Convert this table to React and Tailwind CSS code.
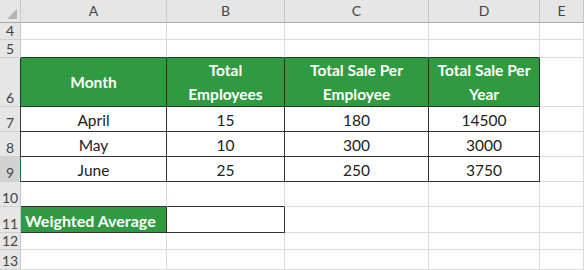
import React from 'react';

const cols = ['A', 'B', 'C', 'D', 'E'];

// rows of the sheet: [number, height, cells]
const rows = [
  { n: 4, h: 17 },
  { n: 5, h: 18, topOfTable: true },
  {
    n: 6,
    h: 49,
    head: ['Month', 'Total Employees', 'Total Sale Per Employee', 'Total Sale Per Year'],
  },
  { n: 7, h: 25, data: ['April', '15', '180', '14500'] },
  { n: 8, h: 25, data: ['May', '10', '300', '3000'] },
  { n: 9, h: 25, data: ['June', '25', '250', '3750'], selected: true },
  { n: 10, h: 25, aboveAvg: true },
  { n: 11, h: 26, avg: true },
  { n: 12, h: 17 },
  { n: 13, h: 20 },
];

const headPad = ['', 'px-6', 'px-4', 'px-1'];

const headCell = 'flex items-center justify-center text-center font-bold text-white bg-[#2f9a40] leading-[24px] text-[15.5px] border-r border-b border-r-[#1e3a22] border-b-[#1e3a22]';

const App = () => {
  return (
    <div
      className="w-[584px] h-[270px] overflow-hidden bg-white text-[#222]"
      style={{ fontFamily: 'Lato, "Open Sans", sans-serif' }}
    >
      <div className="grid grid-cols-[21px_146px_118px_144px_111px_1fr]">
        {/* column header row */}
        <div className="h-[23px] bg-[#e6e6e6] border-r border-b border-r-[#c8c8c8] border-b-[#ababab] relative">
          <div className="absolute right-[3px] bottom-[3px] w-0 h-0 border-l-[10px] border-l-transparent border-b-[10px] border-b-[#b4b4b4]" />
        </div>
        {cols.map((c) => (
          <div
            key={c}
            className="h-[23px] bg-[#e6e6e6] flex items-center justify-center text-[14px] leading-none text-[#444] border-r border-b border-r-[#c8c8c8] border-b-[#ababab]"
          >
            {c}
          </div>
        ))}

        {rows.map((r) => {
          const rowHead = (
            <div
              key={`h${r.n}`}
              style={{ height: r.h }}
              className={`flex items-end justify-center pb-px text-[14px] leading-[15px] text-[#444] border-b border-b-[#d0d0d0] border-r ${
                r.selected ? 'bg-[#d2d2d2] border-r-[#217346]' : 'bg-[#e6e6e6] border-r-[#c8c8c8]'
              }`}
            >
              {r.n}
            </div>
          );

          if (r.head) {
            return (
              <React.Fragment key={r.n}>
                {rowHead}
                {r.head.map((t, i) => (
                  <div key={i} className={`${headCell} ${i === 0 ? 'border-l border-l-[#1e3a22] -ml-px' : ''}`}>
                    <span className={headPad[i]}>{t}</span>
                  </div>
                ))}
                <div className="border-r border-b border-[#dadada]" />
              </React.Fragment>
            );
          }

          if (r.data) {
            return (
              <React.Fragment key={r.n}>
                {rowHead}
                {r.data.map((t, i) => (
                  <div
                    key={i}
                    className={`flex items-end justify-center pb-[3px] text-[15.5px] leading-none border-r border-b border-[#333] ${
                      i === 0 && r.selected ? 'border-l border-l-[#217346] -ml-px' : ''
                    } ${i === 0 && !r.selected ? 'border-l border-l-[#333] -ml-px' : ''}`}
                  >
                    {t}
                  </div>
                ))}
                <div className="border-r border-b border-[#dadada]" />
              </React.Fragment>
            );
          }

          if (r.avg) {
            return (
              <React.Fragment key={r.n}>
                {rowHead}
                <div className="flex items-center pl-[4px] pt-[2px] font-bold text-white text-[16px] leading-none bg-[#2f9a40] border-r border-b border-[#333]">
                  Weighted Average
                </div>
                <div className="bg-white border-r border-b border-[#333]" />
                <div className="border-r border-b border-[#dadada]" />
                <div className="border-r border-b border-[#dadada]" />
                <div className="border-r border-b border-[#dadada]" />
              </React.Fragment>
            );
          }

          return (
            <React.Fragment key={r.n}>
              {rowHead}
              {cols.map((c, i) => {
                let b = 'border-b-[#dadada]';
                if (r.topOfTable && i < 4) b = 'border-b-[#1e3a22]';
                if (r.aboveAvg && i < 2) b = 'border-b-[#333]';
                return <div key={c} className={`border-r border-b border-r-[#dadada] ${b}`} />;
              })}
            </React.Fragment>
          );
        })}
      </div>
    </div>
  );
};

export default App;
